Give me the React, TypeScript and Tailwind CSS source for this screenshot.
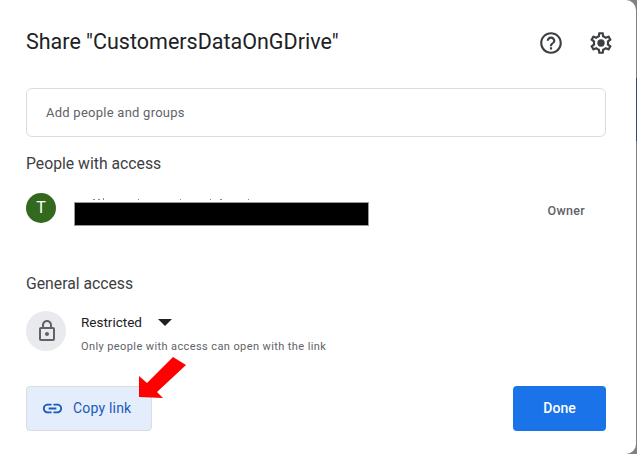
import React from 'react';

const Help = () => (
  <svg width="26" height="26" viewBox="0 0 24 24" fill="#3c4043">
    <path d="M11 18h2v-2h-2v2zm1-16C6.48 2 2 6.48 2 12s4.48 10 10 10 10-4.48 10-10S17.52 2 12 2zm0 18c-4.41 0-8-3.59-8-8s3.59-8 8-8 8 3.59 8 8-3.59 8-8 8zm0-14c-2.21 0-4 1.79-4 4h2c0-1.1.9-2 2-2s2 .9 2 2c0 2-3 1.75-3 5h2c0-2.25 3-2.5 3-5 0-2.21-1.79-4-4-4z" />
  </svg>
);

const Gear = () => (
  <svg width="26" height="26" viewBox="0 0 24 24" fill="#3c4043">
    <path d="M19.43 12.98c.04-.32.07-.64.07-.98 0-.34-.03-.66-.07-.98l2.11-1.65c.19-.15.24-.42.12-.64l-2-3.46c-.09-.16-.26-.25-.44-.25-.06 0-.12.01-.17.03l-2.49 1c-.52-.4-1.08-.73-1.69-.98l-.38-2.65C14.46 2.18 14.25 2 14 2h-4c-.25 0-.46.18-.49.42l-.38 2.65c-.61.25-1.17.59-1.69.98l-2.49-1c-.06-.02-.12-.03-.18-.03-.17 0-.34.09-.43.25l-2 3.46c-.13.22-.07.49.12.64l2.11 1.65c-.04.32-.07.65-.07.98 0 .33.03.66.07.98l-2.11 1.65c-.19.15-.24.42-.12.64l2 3.46c.09.16.26.25.44.25.06 0 .12-.01.17-.03l2.49-1c.52.4 1.08.73 1.69.98l.38 2.65c.03.24.24.42.49.42h4c.25 0 .46-.18.49-.42l.38-2.65c.61-.25 1.17-.59 1.69-.98l2.49 1c.06.02.12.03.18.03.17 0 .34-.09.43-.25l2-3.46c.12-.22.07-.49-.12-.64l-2.11-1.65zm-1.98-1.71c.04.31.05.52.05.73 0 .21-.02.43-.05.73l-.14 1.13.89.7 1.08.84-.7 1.21-1.27-.51-1.04-.42-.9.68c-.43.32-.84.56-1.25.73l-1.06.43-.16 1.13-.2 1.35h-1.4l-.19-1.35-.16-1.13-1.06-.43c-.43-.18-.83-.41-1.23-.71l-.91-.7-1.06.43-1.27.51-.7-1.21 1.08-.84.89-.7-.14-1.13c-.03-.31-.05-.54-.05-.74s.02-.43.05-.73l.14-1.13-.89-.7-1.08-.84.7-1.21 1.27.51 1.04.42.9-.68c.43-.32.84-.56 1.25-.73l1.06-.43.16-1.13.2-1.35h1.39l.19 1.35.16 1.13 1.06.43c.43.18.83.41 1.23.71l.91.7 1.06-.43 1.27-.51.7 1.21-1.07.85-.89.7.14 1.13z" />
    <circle cx="12" cy="12" r="3.4" />
  </svg>
);

const Lock = () => (
  <svg width="24" height="24" viewBox="0 0 24 24" fill="#5f6368" className="ml-px">
    <path d="M18 8h-1V6c0-2.76-2.24-5-5-5S7 3.24 7 6v2H6c-1.1 0-2 .9-2 2v10c0 1.1.9 2 2 2h12c1.1 0 2-.9 2-2V10c0-1.1-.9-2-2-2zM9 6c0-1.66 1.34-3 3-3s3 1.34 3 3v2H9V6zm9 14H6V10h12v10zm-6-3c1.1 0 2-.9 2-2s-.9-2-2-2-2 .9-2 2 .9 2 2 2z" />
  </svg>
);

const LinkIcon = () => (
  <svg width="23" height="23" viewBox="0 0 24 24" fill="#185abc">
    <path d="M3.9 12c0-1.71 1.39-3.1 3.1-3.1h4V7H7c-2.76 0-5 2.24-5 5s2.24 5 5 5h4v-1.9H7c-1.71 0-3.1-1.39-3.1-3.1zM8 13h8v-2H8v2zm9-6h-4v1.9h4c1.71 0 3.1 1.39 3.1 3.1s-1.39 3.1-3.1 3.1h-4V17h4c2.76 0 5-2.24 5-5s-2.24-5-5-5z" />
  </svg>
);

const RedArrow = () => (
  <svg width="50" height="58" viewBox="0 0 50 58" className="absolute left-[138px] top-[354px]">
    <polygon points="35,3 48,11 19,38 25,44 1,43 1,22 9,29" fill="#ff0000" />
  </svg>
);

// tops of the name line that stick out above the redaction box
const NameTops = () => (
  <svg width="180" height="3" viewBox="0 0 180 3" className="absolute left-[90px] top-[198px]">
    <g fill="#85888c">
      <rect x="3" y="1" width="2" height="1" />
      <rect x="8" y="1" width="2" height="1" />
      <rect x="13" y="0" width="1" height="2" />
      <rect x="48" y="1" width="1" height="1" />
      <rect x="90" y="1" width="1" height="1" />
      <rect x="120" y="1" width="1" height="1" />
      <rect x="130" y="1" width="2" height="1" />
      <rect x="158" y="1" width="1" height="1" />
    </g>
  </svg>
);

export default function App() {
  return (
    <div className="relative h-[454px] w-[637px] overflow-hidden bg-[#808080] font-['Roboto',sans-serif]">
      <div className="flex h-[454px] w-[636px] flex-col rounded-r-[10px] bg-white pl-[26px] pr-[30px]">
        <div className="flex h-[88px] items-center justify-between pb-[4px]">
          <h1 className="text-[21.5px] font-normal text-[#202124]">Share "CustomersDataOnGDrive"</h1>
          <div className="-mr-[8px] mt-[1px] flex items-center gap-[24px]">
            <Help />
            <Gear />
          </div>
        </div>

        <div className="flex h-[49px] items-center rounded-[6px] border border-[#dadce0] pl-[19px] text-[13px] tracking-[0.25px] text-[#5f6368]">
          Add people and groups
        </div>

        <h2 className="mt-[17px] text-[15.75px] leading-[20px] text-[#3c4043]">People with access</h2>

        <div className="mt-[19px] flex h-[37px] items-start">
          <div className="flex h-[30px] w-[30px] shrink-0 items-center justify-center rounded-full bg-[#33691e] text-[16px] text-white">
            T
          </div>
          <div className="ml-[18px] mt-[9px] h-[24px] w-[295px] border border-[#999] bg-black" />
          <span className="ml-auto mr-[21px] mt-[9px] text-[12.5px] font-medium tracking-[0.3px] text-[#5f6368]">Owner</span>
        </div>

        <h2 className="mt-[44px] text-[15.75px] leading-[20px] text-[#3c4043]">General access</h2>

        <div className="mt-[17px] flex items-start">
          <div className="flex h-[40px] w-[40px] shrink-0 items-center justify-center rounded-full bg-[#e8eaed]">
            <Lock />
          </div>
          <div className="ml-[15px] mt-[3px]">
            <div className="flex items-center text-[13.5px] leading-[16px] text-[#202124]">
              Restricted
              <span className="ml-[16px] h-0 w-0 border-x-[7px] border-t-[7px] border-x-transparent border-t-[#202124]" />
            </div>
            <p className="mt-[10px] text-[11px] leading-[14px] tracking-[0.4px] text-[#5f6368]">Only people with access can open with the link</p>
          </div>
        </div>

        <div className="mt-[32px] flex items-center justify-between">
          <button className="flex h-[45px] w-[126px] items-center justify-start gap-[9px] rounded-[4px] border border-[#dadce0] bg-[#e3edfb] pl-[14px] text-[14px] tracking-[0.2px] text-[#185abc]">
            <LinkIcon />
            Copy link
          </button>
          <button className="h-[45px] w-[93px] rounded-[4px] bg-[#1a73e8] text-[14px] font-medium text-white">Done</button>
        </div>
      </div>
      <div className="absolute right-0 top-[78px] h-[63px] w-px bg-[#2c4a80]" />
      <NameTops />
      <RedArrow />
    </div>
  );
}
